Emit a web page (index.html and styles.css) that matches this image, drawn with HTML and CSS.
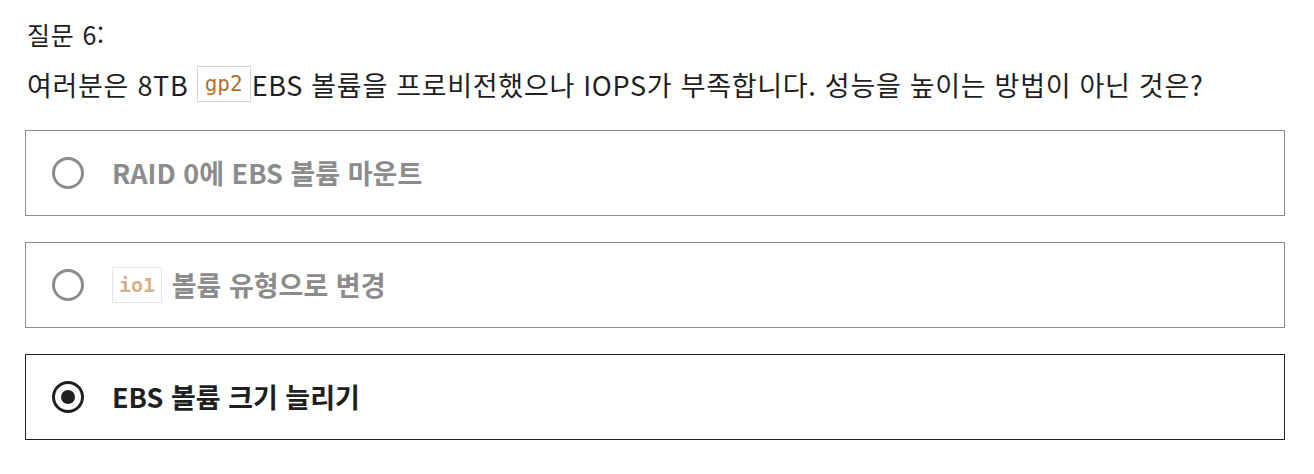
FILE: index.html
```html
<!DOCTYPE html>
<html lang="ko">
<head>
<meta charset="utf-8">
<link rel="stylesheet" href="styles.css">
</head>
<body>
<div class="quiz">
  <div class="q-title">질문 6:</div>
  <div class="q-text">여러분은 8TB <code class="code">gp2</code>EBS 볼륨을 프로비전했으나 IOPS가 부족합니다. 성능을 높이는 방법이 아닌 것은?</div>
  <div class="options">
    <div class="option">
      <span class="radio"></span>
      <span class="label">RAID 0에 EBS 볼륨 마운트</span>
    </div>
    <div class="option">
      <span class="radio"></span>
      <span class="label"><code class="code code-opt">io1</code> 볼륨 유형으로 변경</span>
    </div>
    <div class="option selected">
      <span class="radio"></span>
      <span class="label">EBS 볼륨 크기 늘리기</span>
    </div>
  </div>
</div>
</body>
</html>
```

FILE: styles.css
```css
html, body {
  margin: 0;
  padding: 0;
  background: #ffffff;
}

body {
  font-family: "Noto Sans CJK KR", "Noto Sans", sans-serif;
  color: #1f1f1f;
}

.quiz {
  padding: 17px 29px 0 25px;
}

.q-title {
  font-size: 25px;
  line-height: 34px;
  padding-left: 2px;
  letter-spacing: 0.8px;
}

.q-text {
  margin-top: 16px;
  font-size: 27px;
  line-height: 36px;
  padding-left: 2px;
  letter-spacing: 0.7px;
}

.code {
  display: inline-block;
  font-family: "DejaVu Sans Mono", "Liberation Mono", monospace;
  font-size: 21px;
  line-height: 34px;
  letter-spacing: 0;
  padding: 0 7px;
  border: 1px solid #d3d3d3;
  color: #b5702c;
  vertical-align: top;
  margin-top: -1px;
  margin-right: 1px;
}

.options {
  margin-top: 27px;
  display: flex;
  flex-direction: column;
  gap: 26px;
}

.option {
  height: 86px;
  box-sizing: border-box;
  border: 1px solid #8c8c8c;
  display: flex;
  align-items: center;
  padding-left: 26px;
  gap: 28px;
}

.radio {
  width: 32px;
  height: 32px;
  box-sizing: border-box;
  border: 3px solid #8c8c8c;
  border-radius: 50%;
  display: flex;
  align-items: center;
  justify-content: center;
  flex: none;
}

.label {
  font-size: 27px;
  font-weight: 700;
  color: #8c8c8c;
  line-height: 36px;
}

.code-opt {
  font-size: 20px;
  font-weight: 700;
  color: #d6b089;
  border-color: #e6e6e6;
  line-height: 34px;
  padding: 0 6px;
  margin-right: 2px;
  margin-top: 0;
}

.option.selected {
  border-color: #1f1f1f;
}

.option.selected .radio {
  border-color: #1f1f1f;
}

.option.selected .radio::after {
  content: "";
  width: 14px;
  height: 14px;
  border-radius: 50%;
  background: #1f1f1f;
}

.option.selected .label {
  color: #1f1f1f;
}
```
